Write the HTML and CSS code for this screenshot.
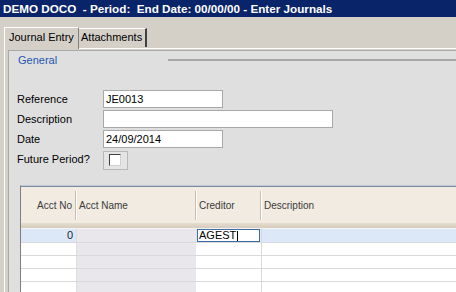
FILE: index.html
```html
<!DOCTYPE html>
<html lang="en">
  <head>
    <meta charset="utf-8">
    <title>Enter Journals</title>
    <link rel="stylesheet" href="styles.css">
  </head>
  <body>
    <div class="window">
      <div class="titlebar">DEMO DOCO  - Period:  End Date: 00/00/00 - Enter Journals</div>
      <div class="tabstrip">
        <div class="tab tab-active">Journal Entry</div>
        <div class="tab tab-second">Attachments</div>
      </div>
      <div class="tabpage">
        <div class="panel">
          <div class="grouphead">
            <span class="grouptitle">General</span>
            <span class="groupline"></span>
          </div>
          <div class="form">
            <div class="field">
              <div class="label">Reference</div>
              <div class="input short">JE0013</div>
            </div>
            <div class="field">
              <div class="label">Description</div>
              <div class="input long"></div>
            </div>
            <div class="field">
              <div class="label">Date</div>
              <div class="input short">24/09/2014</div>
            </div>
            <div class="field">
              <div class="label">Future Period?</div>
              <div class="checkwrap"><div class="checkbox"></div></div>
            </div>
          </div>
          <div class="grid">
            <div class="gridhead">
              <div class="hcell num">Acct No</div>
              <div class="hcell">Acct Name</div>
              <div class="hcell">Creditor</div>
              <div class="hcell last">Description</div>
            </div>
            <div class="gridshade"></div>
            <div class="row row-current">
              <div class="cell num">0</div>
              <div class="cell name"></div>
              <div class="cell cred"><div class="editor">AGEST<span class="caret"></span></div></div>
              <div class="cell desc"></div>
            </div>
            <div class="row">
              <div class="cell num"></div>
              <div class="cell name"></div>
              <div class="cell cred"></div>
              <div class="cell desc"></div>
            </div>
            <div class="row">
              <div class="cell num"></div>
              <div class="cell name"></div>
              <div class="cell cred"></div>
              <div class="cell desc"></div>
            </div>
            <div class="row">
              <div class="cell num"></div>
              <div class="cell name"></div>
              <div class="cell cred"></div>
              <div class="cell desc"></div>
            </div>
            <div class="row">
              <div class="cell num"></div>
              <div class="cell name"></div>
              <div class="cell cred"></div>
              <div class="cell desc"></div>
            </div>
          </div>
        </div>
      </div>
    </div>
  </body>
</html>
```

FILE: styles.css
```css
html, body {
  margin: 0;
  height: 100%;
  overflow: hidden;
}
body {
  background: #d4d0c8;
  font-family: "Liberation Sans", Arial, sans-serif;
  font-size: 11px;
  color: #000;
}
.window {
  display: flex;
  flex-direction: column;
  height: 100%;
}
.titlebar {
  flex: none;
  height: 17px;
  line-height: 17px;
  background: #0a246a;
  color: #fff;
  font-weight: bold;
  font-size: 11.7px;
  padding-left: 3px;
  white-space: pre;
}
.tabstrip {
  flex: none;
  height: 31px;
  display: flex;
  align-items: flex-end;
  padding-left: 4px;
}
.tab {
  box-sizing: border-box;
  height: 19px;
  line-height: 16px;
  border-top: 1px solid #fff;
  border-left: 1px solid #fff;
  border-right: 2px solid #404040;
  padding-left: 2px;
  background: #d4d0c8;
}
.tab-active {
  width: 75px;
  height: 22px;
  line-height: 19px;
  padding-left: 4px;
  margin-bottom: -1px;
  border-right: 1px solid #808080;
  position: relative;
  z-index: 1;
}
.tab-second {
  width: 68px;
  margin-bottom: 1px;
  border-left: none;
}
.tabpage {
  flex: 1;
  min-height: 0;
  display: flex;
  border-top: 1px solid #fff;
  border-left: 1px solid #fff;
  margin-left: 4px;
  padding: 1px 0 0 3px;
}
.panel {
  flex: 1;
  min-height: 0;
  overflow: hidden;
  background: #dfdfdf;
  border-top: 1px solid #a9a9a9;
  border-left: 1px solid #a9a9a9;
  display: flex;
  flex-direction: column;
}
.grouphead {
  flex: none;
  display: flex;
  align-items: center;
  height: 20px;
  padding-left: 9px;
}
.grouptitle {
  width: 150px;
  color: #1f56b0;
  margin-top: -2px;
}
.groupline {
  flex: 1;
  height: 0;
  border-top: 2px solid #a8a8a8;
  margin-top: -3px;
}
.form {
  flex: none;
  display: flex;
  flex-direction: column;
  gap: 2px;
  margin-top: 19px;
  padding-left: 8px;
}
.field {
  display: flex;
  align-items: center;
  height: 18px;
}
.label {
  width: 86px;
}
.input {
  box-sizing: border-box;
  height: 18px;
  line-height: 16px;
  background: #fff;
  border: 1px solid #a8a8a8;
  padding-left: 2px;
}
.short {
  width: 120px;
}
.long {
  width: 230px;
}
.checkwrap {
  box-sizing: border-box;
  width: 25px;
  height: 19px;
  margin-top: 2px;
  border: 1px solid #b8b8b8;
  background: #e4e4e4;
  padding: 2px 0 0 5px;
}
.checkbox {
  box-sizing: border-box;
  width: 12px;
  height: 12px;
  background: #fff;
  border-top: 1px solid #404040;
  border-left: 1px solid #404040;
  border-right: 1px solid #d0d0d0;
  border-bottom: 1px solid #d0d0d0;
}
.grid {
  flex: none;
  margin: 17px 0 0 11px;
  border-top: 1px solid #c4cad4;
  border-left: 1px solid #7e7e7e;
  background: #fff;
  font-size: 10px;
}
.gridhead, .row {
  display: grid;
  grid-template-columns: 55px 120px 65px 1fr;
}
.gridhead {
  height: 36px;
  background: #f1ebe1;
  border-top: 1px solid #7b8aa3;
  color: #3a3a3a;
}
.hcell {
  margin: 4px 0 3px;
  padding: 0 3px;
  line-height: 29px;
  border-right: 1px solid #c8c0b2;
  box-shadow: 1px 0 0 #fff;
}
.hcell.last {
  border-right: none;
  box-shadow: none;
}
.num {
  text-align: right;
}
.gridshade {
  height: 5px;
  background: linear-gradient(#e6ddcf, #d5ccbd);
  border-bottom: 1px solid #f4f4f4;
}
.row {
  height: 13px;
  box-sizing: border-box;
  border-bottom: 1px solid #d9d9d9;
}
.row-current {
  height: 14px;
  background: #dce8f8;
}
.cell {
  padding: 0 3px;
  line-height: 12px;
  color: #1a1f33;
  font-size: 11px;
}
.name {
  background: #e9e7eb;
  border-left: 1px solid #dcdcdc;
}
.cred {
  padding: 0 0 0 1px;
}
.desc {
  border-left: 1px solid #d9d9d9;
}
.editor {
  box-sizing: border-box;
  width: 63px;
  height: 13px;
  line-height: 11px;
  background: #fff;
  border: 1px solid #3f6aa8;
  color: #000;
  padding-left: 1px;
  display: flex;
  align-items: center;
}
.caret {
  display: inline-block;
  width: 1px;
  height: 10px;
  background: #000;
  margin-left: 1px;
}
```
